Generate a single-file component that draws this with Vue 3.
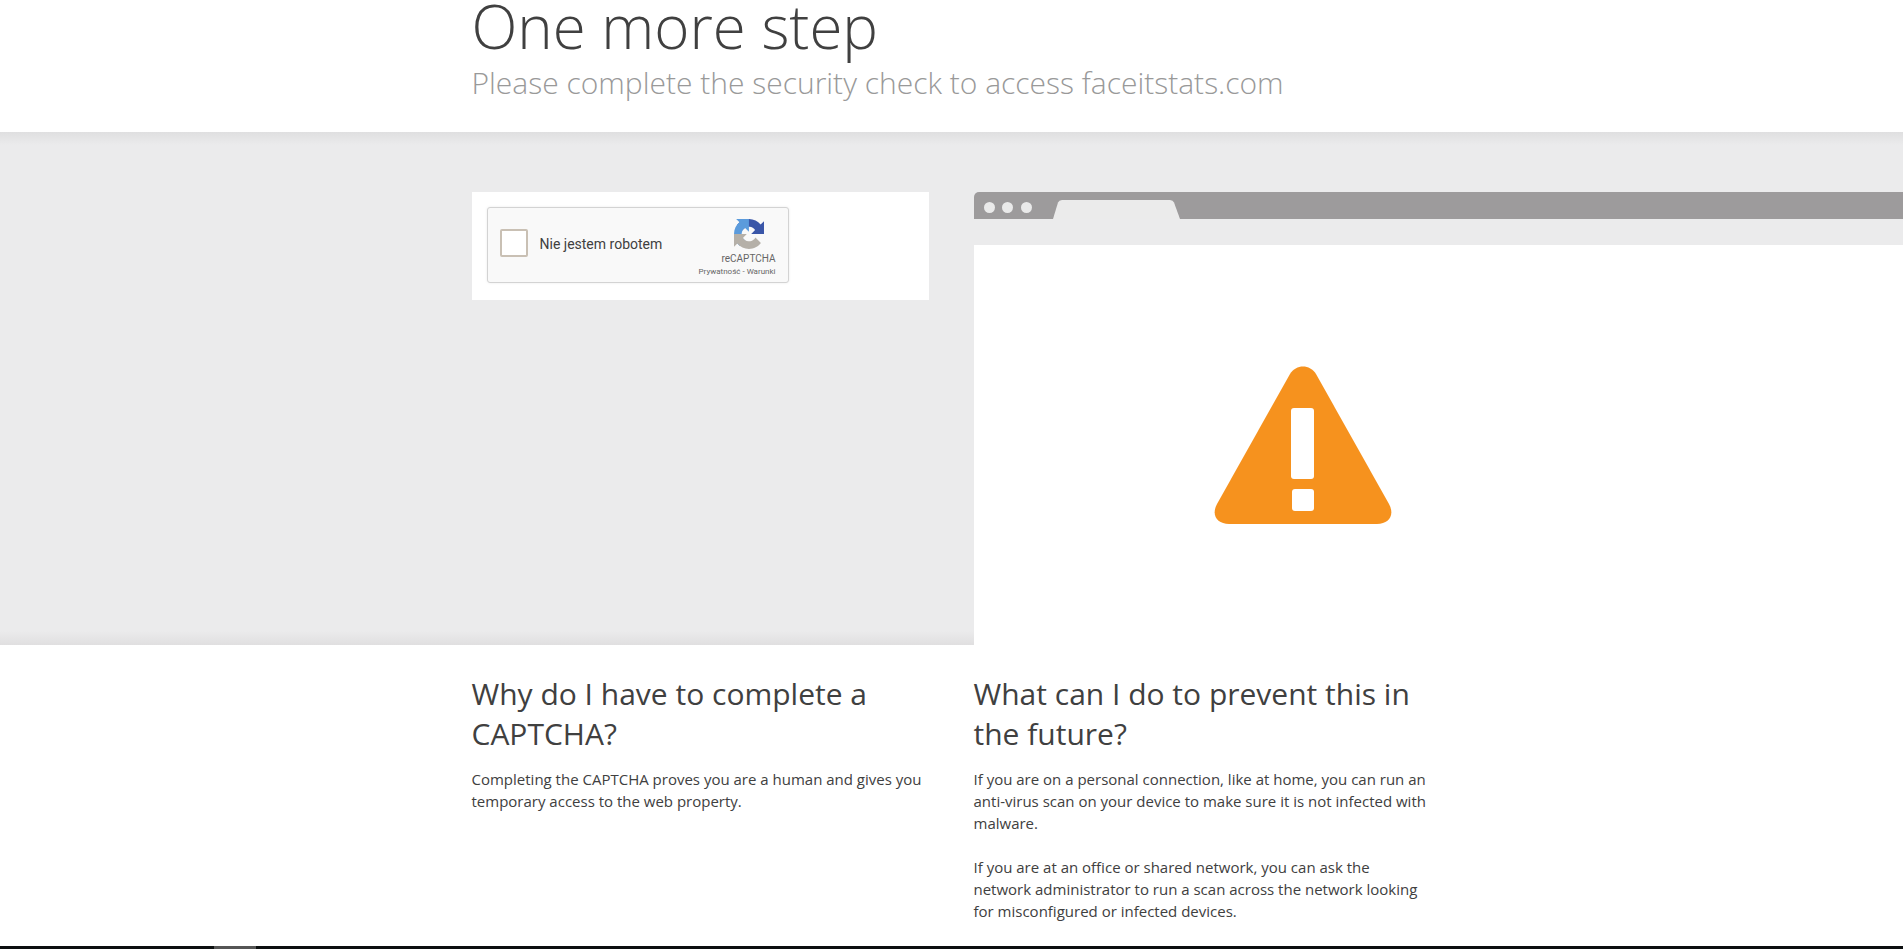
<template>
  <div class="page">
    <header class="head">
      <div class="wrap">
        <h1>One more step</h1>
        <p class="sub">Please complete the security check to access faceitstats.com</p>
      </div>
    </header>

    <section class="band">
      <div class="wrap cols">
        <div class="left">
          <div class="captcha-box">
            <div class="widget">
              <span class="check"></span>
              <span class="label">Nie jestem robotem</span>
              <div class="brand">
                <svg class="logo" viewBox="0 0 64 64" aria-hidden="true">
                  <path fill="#3a56a8" d="M64 31.955l-.033-1.37V4.687l-7.16 7.16C50.948 4.674 42.033.093 32.05.093c-10.4 0-19.622 4.96-25.458 12.64l11.736 11.86a15.55 15.55 0 0 1 4.754-5.334c2.05-1.6 4.952-2.906 8.968-2.906.485 0 .86.057 1.135.163 4.976.393 9.29 3.14 11.83 7.124l-8.307 8.307 32.29.004" />
                  <path fill="#5b9bdc" d="M31.862 0l-1.37.033H4.594l7.16 7.16C4.58 13.05 0 21.967 0 31.95c0 10.4 4.96 19.622 12.64 25.458l11.86-11.736a15.55 15.55 0 0 1-5.334-4.754c-1.6-2.05-2.906-4.952-2.906-8.968 0-.485.057-.86.163-1.135.393-4.976 3.14-9.29 7.124-11.83l8.307 8.307L31.862 0" />
                  <path fill="#b5b0a8" d="M.001 31.95l.033 1.37v25.9l7.16-7.16c5.86 7.173 14.774 11.754 24.76 11.754 10.4 0 19.622-4.96 25.458-12.64l-11.736-11.86a15.55 15.55 0 0 1-4.754 5.334c-2.05 1.6-4.952 2.906-8.968 2.906-.485 0-.86-.057-1.135-.163-4.976-.393-9.29-3.14-11.83-7.124l8.307-8.307c-10.23.04-21.8.063-32.29-.004" />
                </svg>
                <span class="brand-name">reCAPTCHA</span>
                <span class="brand-links">Prywatność - Warunki</span>
              </div>
            </div>
          </div>
        </div>

        <div class="browser">
          <div class="chrome">
            <span class="dot"></span>
            <span class="dot"></span>
            <span class="dot"></span>
            <svg class="tab" viewBox="0 0 127 19" aria-hidden="true">
              <path fill="#ebebeb" d="M0 19 L5 2.5 Q6 0 9 0 L117 0 Q120 0 121 2.5 L127 19 Z" />
            </svg>
          </div>
          <div class="screen">
            <svg class="warn" viewBox="0 0 178 158" aria-hidden="true">
              <path fill="#f6921e" d="M76 8 C82 -2 96 -2 102 8 L175 138 C181 149 175 158 163 158 L15 158 C3 158 -3 149 3 138 Z" />
              <rect fill="#fff" x="77" y="42" width="23" height="71" rx="3" />
              <rect fill="#fff" x="78" y="123" width="22" height="22" rx="3" />
            </svg>
          </div>
        </div>
      </div>
    </section>

    <section class="wrap cols info">
      <div class="left">
        <h2>Why do I have to complete a CAPTCHA?</h2>
        <p>Completing the CAPTCHA proves you are a human and gives you temporary access to the web property.</p>
      </div>
      <div class="right">
        <h2>What can I do to prevent this in the future?</h2>
        <p>If you are on a personal connection, like at home, you can run an anti-virus scan on your device to make sure it is not infected with malware.</p>
        <p>If you are at an office or shared network, you can ask the network administrator to run a scan across the network looking for misconfigured or infected devices.</p>
      </div>
    </section>

    <div class="strip"><span class="strip-thumb"></span></div>
  </div>
</template>

<script setup>
</script>

<style>
html,
body {
  margin: 0;
  overflow: hidden;
  background: #fff;
}
</style>

<style scoped>
.page {
  height: 949px;
  display: flex;
  flex-direction: column;
  font-family: "Open Sans", "Liberation Sans", sans-serif;
  color: #404040;
  overflow: hidden;
}
.wrap {
  width: 960px;
  margin: 0 auto;
  flex-shrink: 0;
}
.head {
  height: 132px;
  flex-shrink: 0;
  background: #fff;
}
h1 {
  margin: 0;
  font-size: 60px;
  font-weight: 300;
  line-height: 53px;
  color: #404040;
}
.sub {
  margin: 12px 0 0;
  font-size: 30px;
  font-weight: 300;
  line-height: 36px;
  color: #999;
}
.band {
  height: 513px;
  flex-shrink: 0;
  overflow: hidden;
  background:
    linear-gradient(#dfdfe0, #ebebec) top / 100% 13px no-repeat,
    linear-gradient(#ebebec, #e0dfe0) bottom / 100% 14px no-repeat,
    #ebebec;
}
.cols {
  display: flex;
  gap: 45px;
}
.left {
  width: 457px;
  flex-shrink: 0;
}
.captcha-box {
  margin-top: 60px;
  height: 108px;
  background: #fff;
  padding: 15px;
  box-sizing: border-box;
}
.widget {
  width: 302px;
  height: 76px;
  box-sizing: border-box;
  display: flex;
  align-items: flex-start;
  background: #f9f9f9;
  border: 1px solid #d3d3d3;
  border-radius: 3px;
  box-shadow: 0 0 3px rgba(0, 0, 0, 0.08);
  padding: 0 12px;
  font-family: Roboto, "Liberation Sans", sans-serif;
}
.check {
  width: 28px;
  height: 28px;
  margin-top: 21px;
  box-sizing: border-box;
  background: #fff;
  border: 2px solid #c9c0b4;
  border-radius: 2px;
}
.label {
  margin: 28px 0 0 12px;
  font-size: 14px;
  line-height: 16px;
  color: #404040;
}
.brand {
  margin-left: auto;
  padding-top: 11px;
  display: flex;
  flex-direction: column;
  align-items: flex-end;
  color: #666;
}
.logo {
  width: 30px;
  height: 30px;
  margin-right: 12px;
}
.brand-name {
  font-size: 10px;
  line-height: 12px;
  margin-top: 4px;
}
.brand-links {
  font-size: 8px;
  line-height: 10px;
  margin-top: 2px;
}
.browser {
  width: 1000px;
  flex-shrink: 0;
  margin-top: 60px;
}
.chrome {
  height: 27px;
  background: #9d9b9c;
  border-radius: 5px 0 0 0;
  display: flex;
  align-items: center;
  gap: 7.5px;
  padding-left: 10px;
}
.dot {
  width: 11px;
  height: 11px;
  margin-top: 3px;
  border-radius: 50%;
  background: #eaeaea;
}
.tab {
  width: 127px;
  height: 19px;
  margin-left: 14px;
  align-self: flex-end;
}
.screen {
  margin-top: 26px;
  height: 400px;
  background: #fff;
  padding: 121px 0 0 240px;
  box-sizing: border-box;
}
.warn {
  display: block;
  width: 178px;
  height: 158px;
}
.info {
  padding-top: 29px;
  flex: 1;
}
.right {
  width: 455px;
}
h2 {
  margin: 0;
  font-size: 30px;
  font-weight: 400;
  line-height: 40px;
  color: #404040;
}
.info p {
  margin: 14px 0 0;
  font-size: 15px;
  line-height: 22px;
}
.info p + p {
  margin-top: 22px;
}
.strip {
  height: 3px;
  flex-shrink: 0;
  background: #0c0f10;
  padding-left: 214px;
}
.strip-thumb {
  display: block;
  width: 42px;
  height: 3px;
  background: #555;
}
</style>
